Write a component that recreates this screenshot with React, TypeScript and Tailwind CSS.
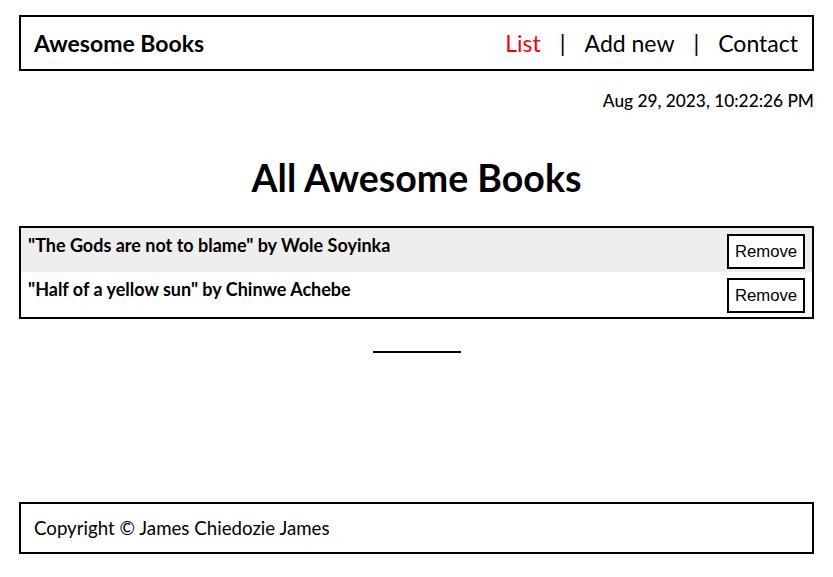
const books = [
  { title: 'The Gods are not to blame', author: 'Wole Soyinka' },
  { title: 'Half of a yellow sun', author: 'Chinwe Achebe' },
];

const App = () => {
  return (
    <div className="flex min-h-screen flex-col px-[19px] pb-[23px] pt-[15px] text-black font-['Lato',sans-serif]">
      <header className="flex h-[56px] items-center justify-between border-2 border-black pl-[13px] pr-[14px]">
        <h1 className="text-[23px] font-bold">Awesome Books</h1>
        <nav className="flex items-center gap-[19px] text-[23px]">
          <a className="text-[#ff0000]">List</a>
          <span>|</span>
          <a>Add new</a>
          <span>|</span>
          <a>Contact</a>
        </nav>
      </header>
      <p className="mt-[17px] text-right text-[17.3px] font-medium">Aug 29, 2023, 10:22:26 PM</p>
      <h2 className="mt-[41px] text-center text-[37.5px] font-bold leading-[46px]">All Awesome Books</h2>
      <ul className="mt-[25px] border-2 border-black">
        {books.map((book, i) => (
          <li
            key={book.title}
            className={`flex items-start justify-between px-[7px] pt-[6px] pb-[3px] last:pb-[4px] ${i % 2 === 0 ? 'bg-[#eeeeee]' : 'bg-white'}`}
          >
            <span className="text-[18px] font-bold leading-[22px]">
              "{book.title}" by {book.author}
            </span>
            <button className="flex h-[35px] w-[78px] items-center justify-center border-2 border-black bg-white text-[16.7px] font-['Liberation_Sans',Arial,sans-serif]">
              Remove
            </button>
          </li>
        ))}
      </ul>
      <hr className="mx-auto mt-[32px] w-[88px] border-t-2 border-black" />
      <footer className="mt-auto flex h-[52px] items-center border-2 border-black px-[13px] text-[18.7px]">
        Copyright © James Chiedozie James
      </footer>
    </div>
  );
};

export default App;
